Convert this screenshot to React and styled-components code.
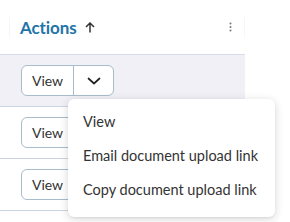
import styled, { createGlobalStyle } from "styled-components";

const Global = createGlobalStyle`
  body {
    margin: 0;
    background: #fff;
    font-family: Lato, "Open Sans", sans-serif;
  }
`;

const Page = styled.div`
  position: relative;
  width: 290px;
  height: 222px;
  overflow: hidden;
`;

const Table = styled.div`
  width: 245px;
`;

const HeaderRow = styled.div`
  height: 54px;
  display: flex;
  align-items: center;
  border-bottom: 1px solid #d8dde5;
`;

const HeaderCell = styled.div`
  flex: 1;
  margin-left: 9px;
  height: 20px;
  display: flex;
  align-items: center;
  padding-left: 10px;
  padding-right: 12px;
  border-left: 1px solid #f6f6f6;
  border-right: 1px solid #f6f6f6;
`;

const Title = styled.span`
  color: #1f74a8;
  font-weight: 700;
  font-size: 17px;
  letter-spacing: -0.1px;
`;

const SortIcon = styled.svg`
  margin-left: 8px;
`;

const Kebab = styled.svg`
  margin-left: auto;
`;

const Row = styled.div`
  height: 51px;
  display: flex;
  align-items: center;
  padding-left: 21px;
  border-bottom: 1px solid #c9d6e2;
  background: ${(p) => (p.active ? "#f0f0f6" : "#fff")};
`;

const SplitButton = styled.div`
  display: flex;
  height: 31px;
  border: 1px solid #a8bccb;
  border-radius: 6px;
  background: #fff;
  box-sizing: border-box;
`;

const ButtonPart = styled.div`
  display: flex;
  align-items: center;
  justify-content: center;
  width: ${(p) => p.w}px;
  font-size: 14px;
  color: #333;
  & + & {
    border-left: 1px solid #a8bccb;
  }
`;

const Menu = styled.div`
  position: absolute;
  left: 68px;
  top: 99px;
  width: 207px;
  padding: 6px 0 10px;
  background: #fff;
  border-radius: 6px;
  box-shadow: 0 2px 10px rgba(0, 0, 0, 0.16), 0 1px 2px rgba(0, 0, 0, 0.06);
`;

const MenuItem = styled.div`
  height: 34px;
  line-height: 34px;
  padding-left: 15px;
  font-size: 14.5px;
  color: #333;
  white-space: nowrap;
`;

function Chevron() {
  return (
    <svg width="14" height="8" viewBox="0 0 14 8">
      <path d="M1.5 1.5 L7 6.5 L12.5 1.5" fill="none" stroke="#222" strokeWidth="1.7" strokeLinecap="round" strokeLinejoin="round" />
    </svg>
  );
}

export default function App() {
  return (
    <Page>
      <Global />
      <Table>
        <HeaderRow>
          <HeaderCell>
            <Title>Actions</Title>
            <SortIcon width="10" height="11" viewBox="0 0 10 11">
              <path d="M5 10.5 V1.5 M1 5 L5 1 L9 5" fill="none" stroke="#333" strokeWidth="1.5" />
            </SortIcon>
            <Kebab width="3" height="10" viewBox="0 0 3 10">
              <circle cx="1.5" cy="1.5" r="1" fill="#777" />
              <circle cx="1.5" cy="5" r="1" fill="#777" />
              <circle cx="1.5" cy="8.5" r="1" fill="#777" />
            </Kebab>
          </HeaderCell>
        </HeaderRow>
        {[0, 1, 2].map((i) => (
          <Row key={i} active={i === 0}>
            <SplitButton>
              <ButtonPart w={51}>View</ButtonPart>
              <ButtonPart w={39}>
                <Chevron />
              </ButtonPart>
            </SplitButton>
          </Row>
        ))}
      </Table>
      <Menu>
        <MenuItem>View</MenuItem>
        <MenuItem>Email document upload link</MenuItem>
        <MenuItem>Copy document upload link</MenuItem>
      </Menu>
    </Page>
  );
}
